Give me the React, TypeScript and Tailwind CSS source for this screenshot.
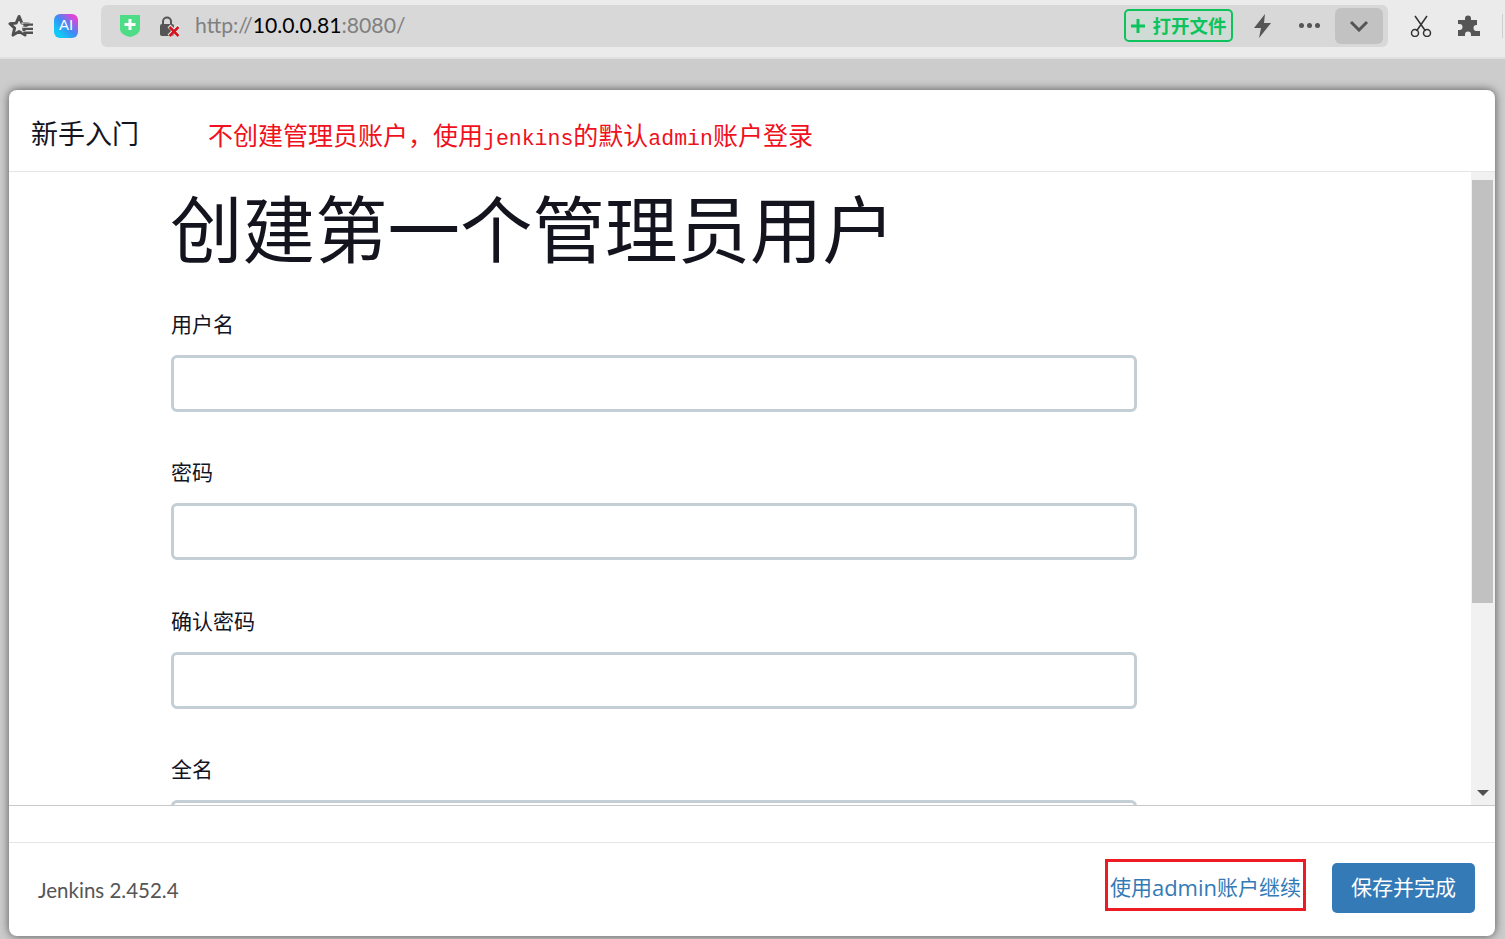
const sans = 'font-["Open_Sans","Noto_Sans_CJK_SC",sans-serif]'

const fields = ['用户名', '密码', '确认密码', '全名']

/** 地址栏左侧的收藏图标 */
function FavoritesIcon() {
  return (
    <svg width="25" height="24" viewBox="0 0 26 24">
      <path d="M11.500 2l3 7 7 .6-5.400 4.600 1.700 7.300-6.300-3.800-6.300 3.800 1.700-7.300L2 9.600 8.500 9z" fill="none" stroke="#505050" strokeWidth="3" strokeLinejoin="round" />
      <path d="M14 9h12M15 13.500h11M15 18h11" stroke="#ebebeb" strokeWidth="1.500" />
      <path d="M16 10.500h10M16 15h10M16 19h10" stroke="#505050" strokeWidth="2.400" />
    </svg>
  )
}

function ShieldIcon() {
  return (
    <svg width="22" height="24" viewBox="0 0 22 24">
      <path d="M1 1h20v14c0 4-5 7-10 8C6 22 1 19 1 15z" fill="#4fdc86" />
      <path d="M11 5v11M5.500 10.500h11" stroke="#fff" strokeWidth="3" />
    </svg>
  )
}

function LockIcon() {
  return (
    <svg width="22" height="22" viewBox="0 0 22 22">
      <path d="M4 9V6.500a4 4 0 0 1 8 0V9" fill="none" stroke="#555" strokeWidth="2" />
      <rect x="1" y="9" width="14" height="12" rx="2" fill="#555" />
      <path d="M10 11l10 10M20 11L10 21" stroke="#ebebeb" strokeWidth="4" />
      <path d="M10.500 12l9 9M19.500 12l-9 9" stroke="#d4141c" strokeWidth="2.500" />
    </svg>
  )
}

function BoltIcon() {
  return (
    <svg width="18" height="24" viewBox="0 0 18 24" fill="#555">
      <path d="M12 0L1 14h7L6 24l12-15h-7z" />
    </svg>
  )
}

function ScissorsIcon() {
  return (
    <svg width="22" height="22" viewBox="0 0 22 22" fill="none" stroke="#333" strokeWidth="1.500">
      <path d="M5 1l10.500 15M17 1L6.500 16" />
      <circle cx="5" cy="18" r="3.500" />
      <circle cx="17" cy="18" r="3.500" />
    </svg>
  )
}

function PuzzleIcon() {
  return (
    <svg width="24" height="24" viewBox="0 0 24 24" fill="#555">
      <path d="M8 4.500a3 3 0 0 1 6 0V6h6v5h-.5a3 3 0 0 0 0 6h3.500v5h-9v-1.500a3 3 0 0 0-6 0V22H1v-6h1.500a3 3 0 0 0 0-6H1V6h7z" />
    </svg>
  )
}

function Toolbar() {
  return (
    <div className="flex h-[59px] shrink-0 items-center border-b-2 border-[#e0e0e0] bg-[#ebebeb] pb-[6px]">
      <div className="flex w-[101px] shrink-0 items-center gap-[21px] pl-[8px]">
        <FavoritesIcon />
        <div className="flex h-[24px] w-[24px] items-center justify-center rounded-[6px] bg-[linear-gradient(45deg,#12c8f5_20%,#3b8cf5_50%,#e045d8_85%)] font-['Liberation_Sans',sans-serif] text-[15px] text-white">
          AI
        </div>
      </div>
      <div className="flex h-[42px] w-[1287px] items-center rounded-[6px] bg-[#d8d8d8] pl-[18px] pr-[5px]">
        <ShieldIcon />
        <span className="ml-[18px] flex"><LockIcon /></span>
        <span className="ml-[14px] mt-[1px] font-['Lato',sans-serif] text-[21.200px] text-[#808080]">
          http://<span className="text-black">10.0.0.81</span>:8080/
        </span>
        <div className="ml-auto flex items-center">
          <div className="flex h-[33px] w-[109px] items-center justify-center gap-[6px] rounded-[5px] border-2 border-[#0fc35c] bg-[#cfdcd6] font-['Noto_Sans_CJK_SC',sans-serif] text-[18.500px] font-bold text-[#0fc35c]">
            <svg width="16" height="16" viewBox="0 0 16 16" stroke="currentColor" strokeWidth="3">
              <path d="M8 1v14M1 8h14" />
            </svg>
            <span>打开文件</span>
          </div>
          <span className="ml-[20px] flex"><BoltIcon /></span>
          <div className="ml-[28px] flex gap-[3px]">
            <i className="h-[5px] w-[5px] rounded-full bg-[#555]" />
            <i className="h-[5px] w-[5px] rounded-full bg-[#555]" />
            <i className="h-[5px] w-[5px] rounded-full bg-[#555]" />
          </div>
          <div className="ml-[15px] flex h-[36px] w-[48px] items-center justify-center rounded-[6px] bg-[#c2c2c2]">
            <svg width="20" height="12" viewBox="0 0 20 12" fill="none" stroke="#555" strokeWidth="3">
              <path d="M2 2l8 8 8-8" />
            </svg>
          </div>
        </div>
      </div>
      <span className="ml-[22px] flex"><ScissorsIcon /></span>
      <span className="ml-[25px] flex"><PuzzleIcon /></span>
      <span className="ml-[21px] h-[24px] w-px bg-[#cfcfcf]" />
    </div>
  )
}

function Field({ label }: { label: string }) {
  return (
    <div className="mb-[46.5px]">
      <label className="mb-[17px] block h-[28px] text-[21px] leading-[28px] text-[#14141f]">{label}</label>
      <div className="h-[57px] w-[966px] rounded-[6px] border-[3px] border-[#c3ced5] bg-white" />
    </div>
  )
}

function FakeScrollbar() {
  return (
    <div className="flex w-[24px] shrink-0 flex-col bg-[#f1f1f1] pl-[1px] pr-[2px] pt-[8px]">
      <div className="h-[423px] bg-[#c1c1c1]" />
      <div className="mt-auto mb-[9px] flex justify-center">
        <div className="h-0 w-0 border-x-[6px] border-t-[6px] border-x-transparent border-t-[#505050]" />
      </div>
    </div>
  )
}

export default function App() {
  return (
    <div className={`flex h-screen w-full flex-col overflow-hidden ${sans}`}>
      <Toolbar />
      <div className="flex min-h-0 flex-1 flex-col bg-[#cccccc] pb-[3px] pl-[9px] pr-[10px] pt-[31px]">
        <div className="flex min-h-0 flex-1 flex-col overflow-hidden rounded-[8px] bg-white shadow-[0_0_10px_rgba(0,0,0,0.6)]">
          {/* 标题栏 */}
          <div className="flex h-[82px] shrink-0 items-center border-b border-[#e5e5e5] pl-[22px]">
            <span className="mt-[8px] w-[177px] text-[27px] text-[#14141f]">新手入门</span>
            <span className="mt-[11px] whitespace-nowrap font-['Noto_Sans_CJK_SC',serif] text-[25px] text-[#f01020]">
              不创建管理员账户，使用<span className="font-['Liberation_Mono',monospace] text-[21.500px]">jenkins</span>的默认<span className="font-['Liberation_Mono',monospace] text-[21.500px]">admin</span>账户登录
            </span>
          </div>

          {/* 表单区域 */}
          <div className="flex min-h-0 flex-1 border-b border-[#c8c8c8]">
            <div className="min-w-0 flex-1 overflow-hidden pl-[162px]">
              <h1 className="mb-[30.500px] ml-[-1px] mt-[7px] text-[72.500px] font-normal leading-[100px] text-[#14141f]">创建第一个管理员用户</h1>
              {fields.map((f) => (
                <Field key={f} label={f} />
              ))}
            </div>
            <FakeScrollbar />
          </div>

          <div className="h-[37px] shrink-0 border-b border-[#e5e5e5]" />

          {/* 底部操作 */}
          <div className="flex h-[93px] shrink-0 items-center pl-[29px] pr-[20px]">
            <span className="mt-[2px] font-['Lato',sans-serif] text-[20.500px] text-[#555]">Jenkins 2.452.4</span>
            <div className="ml-auto flex items-center gap-[26px]">
              <div className="mb-[10px] flex h-[52px] w-[201px] items-center justify-center border-[3px] border-[#ed1c24] pt-[6px] text-[21px] text-[#337ab7]">
                使用<span className="text-[22px]">admin</span>账户继续
              </div>
              <button className="mb-[4px] h-[50px] w-[143px] rounded-[5px] bg-[#337ab7] text-[21px] text-white">保存并完成</button>
            </div>
          </div>
        </div>
      </div>
    </div>
  )
}
